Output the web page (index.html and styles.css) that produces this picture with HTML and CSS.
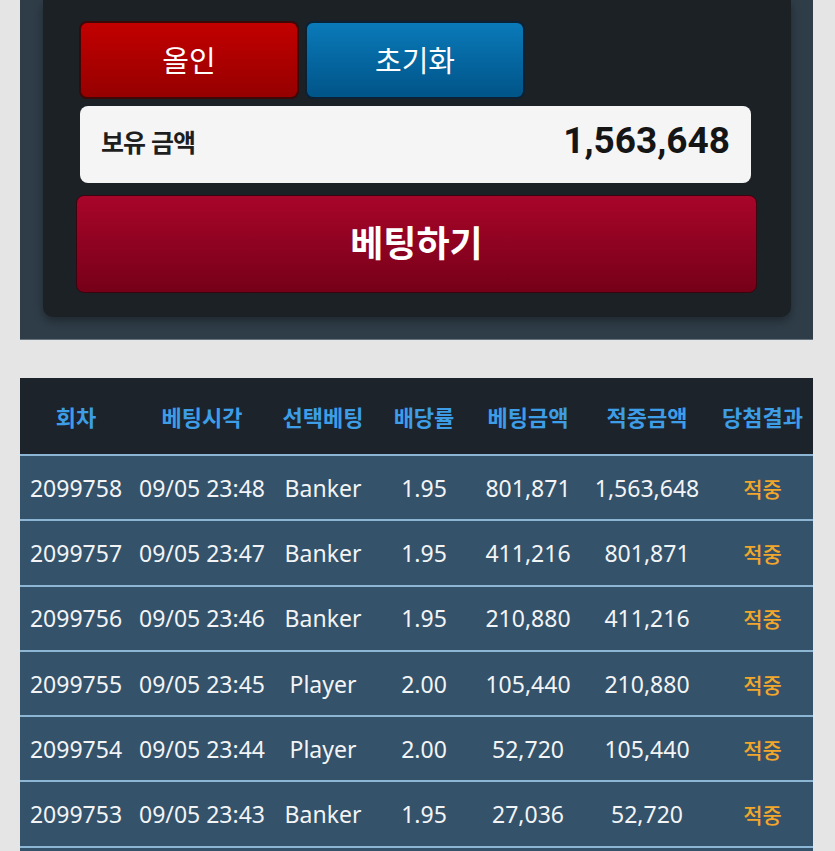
FILE: index.html
```html
<!DOCTYPE html>
<html lang="ko">
<head>
  <meta charset="UTF-8">
  <title>베팅</title>
  <link rel="stylesheet" href="styles.css">
</head>
<body>

  <div class="bet-panel">
    <div class="bet-box">
      <div class="quick-btns">
        <button class="btn-allin">올인</button>
        <button class="btn-reset">초기화</button>
      </div>
      <div class="balance">
        <span class="balance-label">보유 금액</span>
        <span class="balance-value">1,563,648</span>
      </div>
      <button class="btn-bet">베팅하기</button>
    </div>
  </div>

  <table class="history">
    <colgroup>
      <col style="width: 112px">
      <col style="width: 140px">
      <col style="width: 102px">
      <col style="width: 100px">
      <col style="width: 108px">
      <col style="width: 130px">
      <col style="width: 101px">
    </colgroup>
    <thead>
      <tr>
        <th>회차</th>
        <th>베팅시각</th>
        <th>선택베팅</th>
        <th>배당률</th>
        <th>베팅금액</th>
        <th>적중금액</th>
        <th>당첨결과</th>
      </tr>
    </thead>
    <tbody>
      <tr>
        <td>2099758</td><td>09/05 23:48</td><td>Banker</td><td>1.95</td><td>801,871</td><td>1,563,648</td><td class="win">적중</td>
      </tr>
      <tr>
        <td>2099757</td><td>09/05 23:47</td><td>Banker</td><td>1.95</td><td>411,216</td><td>801,871</td><td class="win">적중</td>
      </tr>
      <tr>
        <td>2099756</td><td>09/05 23:46</td><td>Banker</td><td>1.95</td><td>210,880</td><td>411,216</td><td class="win">적중</td>
      </tr>
      <tr>
        <td>2099755</td><td>09/05 23:45</td><td>Player</td><td>2.00</td><td>105,440</td><td>210,880</td><td class="win">적중</td>
      </tr>
      <tr>
        <td>2099754</td><td>09/05 23:44</td><td>Player</td><td>2.00</td><td>52,720</td><td>105,440</td><td class="win">적중</td>
      </tr>
      <tr>
        <td>2099753</td><td>09/05 23:43</td><td>Banker</td><td>1.95</td><td>27,036</td><td>52,720</td><td class="win">적중</td>
      </tr>
      <tr>
        <td>2099752</td><td>09/05 23:42</td><td>Player</td><td>2.00</td><td>13,518</td><td>27,036</td><td class="win">적중</td>
      </tr>
    </tbody>
  </table>

</body>
</html>
```

FILE: styles.css
```css
body {
  background: #e5e5e5;
  font-family: "Noto Sans", "Noto Sans CJK KR", sans-serif;
  margin: 0;
  padding: 0 22px 0 20px;
}

.bet-panel {
  background: #2f3d48;
  padding: 0 22px 22px 23px;
  border-bottom: 1px solid #66747e;
}

.bet-box {
  background: #1c2126;
  border-radius: 0 0 10px 10px;
  box-shadow: 0 4px 8px rgba(0, 0, 0, 0.35);
  padding: 21px 34px 24px 33px;
}

.quick-btns {
  display: flex;
  gap: 6px;
  margin-left: 3px;
}

button {
  font-family: "Noto Sans CJK KR", sans-serif;
  color: #fff;
  cursor: pointer;
}

.quick-btns button {
  width: 220px;
  height: 78px;
  font-size: 29px;
  border-radius: 8px;
  padding: 0 0 2px;
}

.btn-allin {
  background: linear-gradient(#c20000, #960000);
  border: 2px solid #3c0808;
}

.btn-reset {
  background: linear-gradient(#0a7ab9, #005488);
  border: 2px solid #0b2136;
}

.balance {
  display: flex;
  align-items: center;
  justify-content: space-between;
  background: #f5f5f6;
  border-radius: 8px;
  height: 77px;
  box-sizing: border-box;
  margin: 7px 6px 0 4px;
  padding: 0 21px 8px;
}

.balance-label {
  font-family: "Noto Sans CJK KR", sans-serif;
  font-size: 25px;
  font-weight: bold;
  color: #1e1e1e;
  letter-spacing: -1px;
}

.balance-value {
  font-family: Roboto, "Noto Sans", sans-serif;
  font-size: 37px;
  font-weight: bold;
  color: #151515;
}

.btn-bet {
  display: block;
  width: 100%;
  height: 98px;
  margin-top: 12px;
  background: linear-gradient(#a8052a, #760018);
  border: 1px solid #3a0510;
  border-radius: 8px;
  font-size: 36px;
  font-weight: bold;
  padding: 0 0 6px;
}

.history {
  width: 793px;
  margin-top: 38px;
  border-collapse: collapse;
  table-layout: fixed;
  background: #34526a;
}

.history th {
  background: #1c232a;
  color: #3d9de6;
  font-family: "Noto Sans CJK KR", sans-serif;
  font-size: 22px;
  font-weight: bold;
  height: 76px;
  padding: 0;
  white-space: nowrap;
}

.history td {
  color: #f2f4f6;
  font-size: 23px;
  text-align: center;
  height: 63.3px;
  padding: 0;
  border-top: 2px solid #8db5d4;
  white-space: nowrap;
}

.history td.win {
  color: #f2a62b;
  font-family: "Noto Sans CJK KR", sans-serif;
  font-size: 21px;
  font-weight: 500;
}
```
